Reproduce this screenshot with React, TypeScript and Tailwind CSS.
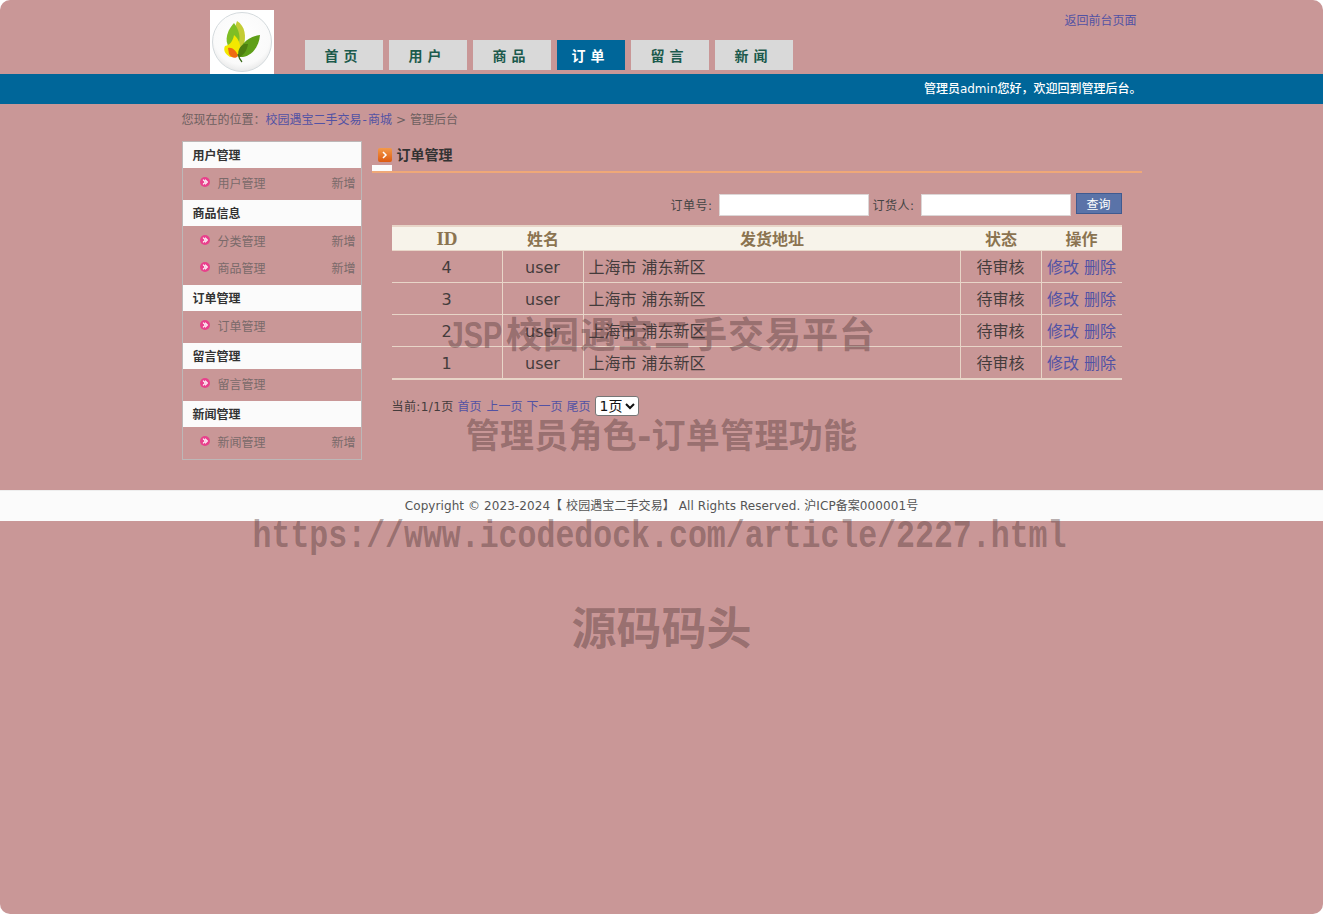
const FONT = "[font-family:'DejaVu_Sans','Noto_Sans_CJK_SC',sans-serif]";

function Logo() {
  return (
    <svg width="64" height="64" viewBox="0 0 64 64" className="block bg-white">
      <defs>
        <radialGradient id="disc" cx="50%" cy="40%" r="60%">
          <stop offset="0%" stopColor="#ffffff" />
          <stop offset="80%" stopColor="#fafafa" />
          <stop offset="100%" stopColor="#e9e9e9" />
        </radialGradient>
      </defs>
      <circle cx="32" cy="32" r="29.5" fill="url(#disc)" stroke="#d4dadd" strokeWidth="1" />
      <path d="M27 11 C35 16 37 26 33 38 L24 38 C24 28 24 20 27 11 Z" fill="#c4cc35" />
      <path d="M24 13 C15 23 14 34 22 41 C30 37 33 25 24 13 Z" fill="#7fbe24" />
      <path d="M24 25 C30 30 32 38 29 46 L20 47 C15 44 13 40 15 36 C20 35 23 31 24 25 Z" fill="#f3e800" />
      <path d="M50 25 C49 38 40 48 29 47 C28 36 37 27 50 25 Z" fill="#5f9f18" />
      <path d="M38 34 C37 41 33 46 29 47 C27 42 29 37 34 34 Z" fill="#4d7e10" />
      <path d="M18 38 C22 37 26 40 28 46 C26 49 21 48 19 44 Z" fill="#ef6a12" />
      <path d="M28 44 C29 48 30 50 32 52" stroke="#3b6b1a" strokeWidth="1.3" fill="none" />
    </svg>
  );
}

function Bullet() {
  return (
    <svg width="10" height="10" viewBox="0 0 10 10" className="block shrink-0">
      <circle cx="5" cy="5" r="5" fill="#e8408c" />
      <path d="M3 2.6 L5.4 5 L3 7.4 M5 2.6 L7.4 5 L5 7.4" stroke="#ffffff" strokeWidth="1.1" fill="none" />
    </svg>
  );
}

function TitleIcon() {
  return (
    <svg width="14" height="14" viewBox="0 0 14 14" className="block shrink-0">
      <defs>
        <linearGradient id="ti" x1="0" y1="0" x2="0" y2="1">
          <stop offset="0%" stopColor="#f49a4a" />
          <stop offset="100%" stopColor="#dd5a10" />
        </linearGradient>
      </defs>
      <rect x="0" y="0" width="14" height="14" rx="2" fill="url(#ti)" />
      <path d="M5 4 L8 7 L5 10" stroke="#ffffff" strokeWidth="1.5" fill="none" />
    </svg>
  );
}

const navItems: [string, boolean][] = [
  ["首 页", false],
  ["用 户", false],
  ["商 品", false],
  ["订 单", true],
  ["留 言", false],
  ["新 闻", false],
];

const sideGroups: { title: string; items: [string, boolean][] }[] = [
  { title: "用户管理", items: [["用户管理", true]] },
  { title: "商品信息", items: [["分类管理", true], ["商品管理", true]] },
  { title: "订单管理", items: [["订单管理", false]] },
  { title: "留言管理", items: [["留言管理", false]] },
  { title: "新闻管理", items: [["新闻管理", true]] },
];

const rows = ["4", "3", "2", "1"];

export default function App() {
  return (
    <div className="bg-white w-[1323px] h-[914px] overflow-hidden">
      <div className={`relative w-[1323px] h-[914px] bg-[#c99797] rounded-[10px] overflow-hidden text-xs text-[#555] ${FONT}`}>
        <header className="w-[960px] mx-auto h-[74px] flex relative">
          <div className="ml-[28px] mt-[10px] w-[64px] h-[64px]">
            <Logo />
          </div>
          <nav className="ml-[31px] mt-[40px] flex gap-[6px] h-[30px]">
            {navItems.map(([label, active]) => (
              <a
                key={label}
                className={
                  active
                    ? "w-[68px] h-[30px] pr-[5px] pt-[2px] flex items-center justify-center bg-[#006699] text-white text-sm font-bold"
                    : "w-[78px] h-[30px] pr-[5px] pt-[2px] flex items-center justify-center bg-[#d9d9d9] text-[#1c5a4c] text-sm font-bold"
                }
              >
                {label}
              </a>
            ))}
          </nav>
          <a className="absolute right-[5px] top-[14px] text-[#5252a4] leading-[14px]">返回前台页面</a>
        </header>

        <div className="h-[30px] bg-[#006699]">
          <div className="w-[960px] mx-auto h-full flex items-center justify-end text-white font-medium">
            管理员admin您好，欢迎回到管理后台。
          </div>
        </div>

        <div className="w-[960px] mx-auto">
          <div className="h-[31px] mb-[6px] flex items-center text-[#6e6060]">
            您现在的位置：<a className="text-[#5252a4]">校园遇宝二手交易<span className="mx-px">-</span>商城</a>
            <span className="mx-[4px]">&gt;</span>管理后台
          </div>

          <div className="flex">
            <aside className="w-[180px] border border-[#bdb7b7]">
              {sideGroups.map((g) => (
                <div key={g.title}>
                  <div className="h-[26px] pt-px bg-[#fbfbfb] pl-[10px] flex items-center font-bold text-[#333]">{g.title}</div>
                  <div className="pt-[2px] pb-[3px]">
                    {g.items.map(([name, add]) => (
                      <div key={name} className="h-[27px] flex items-center pl-[17px] pr-[5px] text-[#7a6a6a]">
                        <span className="-mt-[3px] mr-[8px]">
                          <Bullet />
                        </span>
                        <span className="flex-1">{name}</span>
                        {add && <span>新增</span>}
                      </div>
                    ))}
                  </div>
                </div>
              ))}
            </aside>

            <main className="ml-[10px] w-[770px]">
              <div className="border-b-2 border-[#efa878]">
                <div className="h-[24px] pl-[6px] pt-[4px] flex items-center gap-[5px] text-sm font-bold text-[#333]">
                  <TitleIcon />
                  订单管理
                </div>
                <div className="w-[20px] h-[6px] bg-[#fbfbfb]" />
              </div>

              <div className="px-[20px]">
                <div className="mt-[20px] h-[23px] mb-[9px] flex justify-end items-start text-[#444]">
                  <span className="w-[42px] mt-[5px] mr-[6px] tracking-[0.5px] whitespace-nowrap">订单号:</span>
                  <input className="mt-[1px] w-[150px] h-[22px] bg-white border border-[#dcd6d6]" />
                  <span className="w-[42px] mt-[5px] ml-[4px] mr-[6px] tracking-[0.5px] whitespace-nowrap">订货人:</span>
                  <input className="mt-[1px] w-[150px] h-[22px] bg-white border border-[#dcd6d6]" />
                  <button className="ml-[5px] w-[46px] h-[21px] pt-[2px] bg-[#5a73a8] border border-[#3f5a90] text-white text-xs">查询</button>
                </div>

                <table className="w-[730px] table-fixed border-separate border-spacing-0 text-base text-[#443c3c]">
                  <colgroup>
                    <col className="w-[111px]" />
                    <col className="w-[81px]" />
                    <col className="w-[377px]" />
                    <col className="w-[81px]" />
                    <col className="w-[80px]" />
                  </colgroup>
                  <thead>
                    <tr>
                      {["ID", "姓名", "发货地址", "状态", "操作"].map((h) => (
                        <th
                          key={h}
                          className="h-[26px] p-0 pt-[2px] leading-[20px] bg-[#f7f3ea] border-t-2 border-b border-[#e8d5c8] text-[#8b7350] font-bold [font-family:'Liberation_Serif','Noto_Sans_CJK_SC',serif]"
                        >
                          {h === "ID" ? <span className="text-[19px] leading-[20px]">ID</span> : h}
                        </th>
                      ))}
                    </tr>
                  </thead>
                  <tbody>
                    {rows.map((id, i) => {
                      const b = i === 3 ? "h-[33px] border-b-2 border-[#e8d5c8]" : "h-[32px] border-b border-[#e8d5c8]";
                      return (
                        <tr key={id}>
                          <td className={`${b} p-0 pt-[2px] text-center border-r`}>{id}</td>
                          <td className={`${b} p-0 pt-[2px] text-center border-r`}>user</td>
                          <td className={`${b} p-0 pt-[2px] pl-[5px] border-r`}>上海市 浦东新区</td>
                          <td className={`${b} p-0 pt-[2px] text-center border-r`}>待审核</td>
                          <td className={`${b} p-0 pt-[2px] text-center text-[#5252a4]`}>
                            <a>修改</a> <a>删除</a>
                          </td>
                        </tr>
                      );
                    })}
                  </tbody>
                </table>

                <div className="mt-[16px] h-[20px] flex items-center gap-[4px] text-[#443c3c]">
                  <span className="w-[62px] mt-[2px] whitespace-nowrap tracking-[0.4px]">当前:1/1页</span>
                  <a className="mt-[2px] text-[#5252a4]">首页</a>
                  <a className="mt-[2px] ml-px text-[#5252a4]">上一页</a>
                  <a className="mt-[2px] text-[#5252a4]">下一页</a>
                  <a className="mt-[2px] text-[#5252a4]">尾页</a>
                  <select className="w-[44px] h-[20px] bg-white text-[#111] text-sm border border-[#767676] rounded-[3px]">
                    <option>1页</option>
                  </select>
                </div>
              </div>
            </main>
          </div>
        </div>

        <footer className="mt-[30px] h-[31px] bg-[#fbfbfb] border-t border-[#eee] flex items-center justify-center text-[#555] tracking-[0.08px]">
          Copyright © 2023-2024【 校园遇宝二手交易】 All Rights Reserved. 沪ICP备案000001号
        </footer>

        <div className="absolute left-0 right-0 top-[312px] text-center text-[36px] leading-[48px] font-bold text-[#4a3030]/40 whitespace-nowrap tracking-[1px]">
          <span className="inline-block [font-family:'Liberation_Sans',sans-serif] tracking-normal scale-x-[0.8] -ml-[6px] -mr-[3px]">JSP</span>校园遇宝二手交易平台
        </div>
        <div className="absolute left-0 right-0 top-[412px] text-center text-[34px] leading-[48px] font-bold text-[#4a3030]/40 whitespace-nowrap tracking-[0.3px]">
          管理员角色-订单管理功能
        </div>
        <div className="absolute -left-[4px] right-0 top-[513px] text-center text-[38px] leading-[48px] font-bold text-[#4a3030]/40 whitespace-nowrap [font-family:'Liberation_Mono',monospace] scale-x-[0.83]">
          https://www.icodedock.com/article/2227.html
        </div>
        <div className="absolute left-0 right-0 top-[602px] text-center text-[45px] leading-[56px] font-bold text-[#4a3030]/40 whitespace-nowrap">
          源码码头
        </div>
      </div>
    </div>
  );
}
